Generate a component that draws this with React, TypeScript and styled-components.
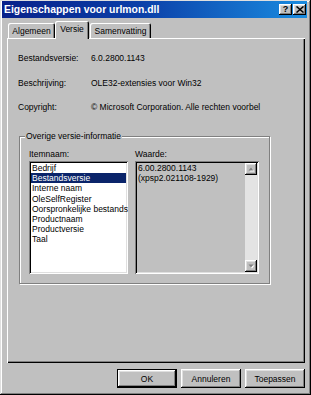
import styled, { createGlobalStyle } from "styled-components";

const GlobalStyle = createGlobalStyle`
  html, body {
    margin: 0;
    padding: 0;
    background: #c0c0c0;
  }
  body {
    font-family: "Liberation Sans", Arial, sans-serif;
    font-size: 8.5px;
    color: #000;
  }
`;

const raised = `
  box-shadow: inset -1px -1px 0 #000, inset 1px 1px 0 #fff,
    inset -2px -2px 0 #808080, inset 2px 2px 0 #dfdfdf;
`;

const sunken = `
  box-shadow: inset 1px 1px 0 #808080, inset -1px -1px 0 #fff,
    inset 2px 2px 0 #000, inset -2px -2px 0 #dfdfdf;
`;

const tabs = [
  { label: "Algemeen", width: 47 },
  { label: "Versie", width: 34, active: true },
  { label: "Samenvatting", width: 61 },
];

const info = [
  ["Bestandsversie:", "6.0.2800.1143"],
  ["Beschrijving:", "OLE32-extensies voor Win32"],
  ["Copyright:", "© Microsoft Corporation. Alle rechten voorbel"],
];

const items = [
  "Bedrijf",
  "Bestandsversie",
  "Interne naam",
  "OleSelfRegister",
  "Oorspronkelijke bestands",
  "Productnaam",
  "Productversie",
  "Taal",
];

const Arrow = ({ down }: { down?: boolean }) => (
  <svg width="7" height="5" viewBox="0 0 7 5">
    {down ? (
      <>
        <polygon points="1.5,1.5 6.5,1.5 4,4.5" fill="#fff" />
        <polygon points="0.5,0.5 5.5,0.5 3,3.5" fill="#808080" />
      </>
    ) : (
      <>
        <polygon points="4,1.5 6.5,4.5 1.5,4.5" fill="#fff" />
        <polygon points="3,0.5 5.5,3.5 0.5,3.5" fill="#808080" />
      </>
    )}
  </svg>
);

export default function App() {
  return (
    <>
      <GlobalStyle />
      <Window>
        <TitleBar>
          <Caption>Eigenschappen voor urlmon.dll</Caption>
          <CaptionButtons>
            <CaptionButton aria-label="Help">
              <HelpMark>?</HelpMark>
            </CaptionButton>
            <CaptionButton aria-label="Sluiten">
              <svg width="8" height="7" viewBox="0 0 8 7">
                <path d="M0.5 0.5 L7.5 6.5 M7.5 0.5 L0.5 6.5" stroke="#000" strokeWidth="1.5" />
              </svg>
            </CaptionButton>
          </CaptionButtons>
        </TitleBar>
        <Body>
          <TabStrip>
            {tabs.map((t) => (
              <Tab key={t.label} $w={t.width} $active={!!t.active}>
                {t.label}
              </Tab>
            ))}
          </TabStrip>
          <Panel>
            <InfoGrid>
              {info.map(([k, v]) => (
                <InfoRow key={k}>
                  <span>{k}</span>
                  <span>{v}</span>
                </InfoRow>
              ))}
            </InfoGrid>
            <Group>
              <Legend>Overige versie-informatie</Legend>
              <GroupColumns>
                <Column $w={99}>
                  <FieldLabel>Itemnaam:</FieldLabel>
                  <ListBox>
                    {items.map((it) => (
                      <ListItem key={it} $selected={it === "Bestandsversie"}>
                        {it}
                      </ListItem>
                    ))}
                  </ListBox>
                </Column>
                <Column $w={124}>
                  <FieldLabel>Waarde:</FieldLabel>
                  <ValueBox>
                    <ValueText>
                      6.00.2800.1143
                      <br />
                      (xpsp2.021108-1929)
                    </ValueText>
                    <ScrollBar>
                      <ScrollButton>
                        <Arrow />
                      </ScrollButton>
                      <ScrollTrack />
                      <ScrollButton>
                        <Arrow down />
                      </ScrollButton>
                    </ScrollBar>
                  </ValueBox>
                </Column>
              </GroupColumns>
            </Group>
          </Panel>
          <ButtonRow>
            <PushButton $default>OK</PushButton>
            <PushButton>Annuleren</PushButton>
            <PushButton>Toepassen</PushButton>
          </ButtonRow>
        </Body>
      </Window>
    </>
  );
}

const Window = styled.div`
  width: 311px;
  height: 395px;
  box-sizing: border-box;
  padding: 1px 4px 7px 2px;
  display: flex;
  flex-direction: column;
  background: #c0c0c0;
  box-shadow: inset -1px -1px 0 #000, inset 1px 1px 0 #dfdfdf,
    inset -2px -2px 0 #808080, inset 2px 2px 0 #fff;
`;

const TitleBar = styled.div`
  height: 17px;
  flex-shrink: 0;
  display: flex;
  align-items: center;
  justify-content: space-between;
  padding: 0 1px 0 2px;
  background: linear-gradient(90deg, #08218a 0%, #0b3fa8 45%, #1a8ce0 100%);
`;

const Caption = styled.span`
  color: #fff;
  font-weight: bold;
  font-size: 10.4px;
  white-space: nowrap;
`;

const CaptionButtons = styled.div`
  display: flex;
  gap: 1px;
`;

const CaptionButton = styled.div`
  width: 13px;
  height: 11px;
  display: flex;
  align-items: center;
  justify-content: center;
  background: #c0c0c0;
  ${raised}
`;

const HelpMark = styled.span`
  font-weight: bold;
  font-size: 9px;
  line-height: 9px;
`;

const Body = styled.div`
  flex: 1;
  display: flex;
  flex-direction: column;
  padding: 3px 2px 0 5px;
`;

const TabStrip = styled.div`
  height: 17px;
  flex-shrink: 0;
  display: flex;
  align-items: flex-end;
  padding-left: 1px;
`;

const Tab = styled.div<{ $w: number; $active: boolean }>`
  position: relative;
  z-index: ${(p) => (p.$active ? 1 : 0)};
  width: ${(p) => p.$w}px;
  height: ${(p) => (p.$active ? 18 : 15)}px;
  margin-bottom: ${(p) => (p.$active ? -1 : 0)}px;
  margin-left: ${(p) => (p.$w === 61 ? 1 : 0)}px;
  box-sizing: border-box;
  padding-bottom: ${(p) => (p.$active ? 2 : 0)}px;
  display: flex;
  align-items: center;
  justify-content: center;
  white-space: nowrap;
  background: #c0c0c0;
  border-radius: 2px 2px 0 0;
  box-shadow: inset 1px 1px 0 #fff, inset -1px 0 0 #000, inset -2px 0 0 #808080;
`;

const Panel = styled.div`
  flex: 1;
  box-sizing: border-box;
  padding: 14px 0 0 11px;
  display: flex;
  flex-direction: column;
  box-shadow: inset 1px 1px 0 #fff, inset -1px -1px 0 #000,
    inset -2px -2px 0 #808080;
`;

const InfoGrid = styled.div`
  display: flex;
  flex-direction: column;
  gap: 12.5px;
`;

const InfoRow = styled.div`
  display: grid;
  grid-template-columns: 73px 1fr;
  line-height: 12px;
  white-space: nowrap;
`;

const Group = styled.fieldset`
  margin: 17px 0 0 1px;
  width: 251px;
  box-sizing: border-box;
  padding: 6px 10px 9px 9px;
  border: 1px solid #808080;
  box-shadow: 1px 1px 0 #fff, inset 1px 1px 0 #fff;
`;

const Legend = styled.legend`
  margin-left: -4px;
  padding: 0 1px;
  line-height: 12px;
  background: #c0c0c0;
`;

const GroupColumns = styled.div`
  display: flex;
  gap: 7px;
`;

const Column = styled.div<{ $w: number }>`
  width: ${(p) => p.$w}px;
  display: flex;
  flex-direction: column;
  gap: 1px;
`;

const FieldLabel = styled.div`
  line-height: 12px;
`;

const ListBox = styled.div`
  height: 113px;
  box-sizing: border-box;
  padding: 2px;
  background: #fff;
  overflow: hidden;
  ${sunken}
`;

const ListItem = styled.div<{ $selected?: boolean }>`
  line-height: 10.2px;
  padding-left: 1px;
  white-space: nowrap;
  background: ${(p) => (p.$selected ? "#0a246a" : "transparent")};
  color: ${(p) => (p.$selected ? "#fff" : "#000")};
`;

const ValueBox = styled.div`
  height: 113px;
  box-sizing: border-box;
  padding: 2px;
  display: flex;
  background: #c0c0c0;
  ${sunken}
`;

const ValueText = styled.div`
  flex: 1;
  padding-left: 1px;
  line-height: 10.2px;
  white-space: nowrap;
`;

const ScrollBar = styled.div`
  width: 12px;
  display: flex;
  flex-direction: column;
`;

const ScrollButton = styled.div`
  height: 12px;
  flex-shrink: 0;
  display: flex;
  align-items: center;
  justify-content: center;
  background: #c0c0c0;
  ${raised}
`;

const ScrollTrack = styled.div`
  flex: 1;
  background: #e3e3e3;
`;

const ButtonRow = styled.div`
  height: 19px;
  margin-top: 6px;
  flex-shrink: 0;
  display: flex;
  justify-content: flex-end;
  gap: 4px;
`;

const PushButton = styled.div<{ $default?: boolean }>`
  width: 60px;
  height: 19px;
  box-sizing: border-box;
  display: flex;
  align-items: center;
  justify-content: center;
  background: #c0c0c0;
  ${(p) =>
    p.$default
      ? `box-shadow: inset 0 0 0 1px #000, inset -2px -2px 0 #000, inset 2px 2px 0 #fff,
          inset -3px -3px 0 #808080, inset 3px 3px 0 #dfdfdf;`
      : raised}
`;
